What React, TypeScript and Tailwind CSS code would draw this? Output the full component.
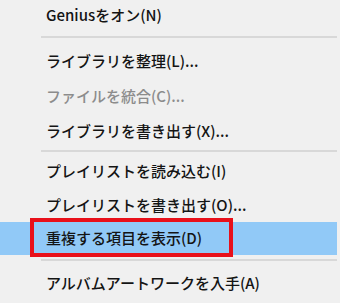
import React from "react";

type Item = {
  label: string;
  h: string;
  disabled?: boolean;
  active?: boolean;
};

const Row = ({ item }: { item: Item }) => {
  return (
    <div
      className={`relative flex items-center pl-[46px] ${item.h} ${
        item.active ? "bg-[#91c9f7]" : ""
      } ${item.disabled ? "text-[#8c8c8c]" : "text-[#141414]"}`}
    >
      {item.active && (
        <div className="absolute left-[30px] top-[-4px] w-[203px] h-[39px] border-[4px] border-[#e8101a]" />
      )}
      <span className="whitespace-nowrap">{item.label}</span>
    </div>
  );
};

const Separator = ({ h }: { h: string }) => (
  <div className={`flex items-center pl-[41px] ${h}`}>
    <div className="w-full h-[2px] bg-[#d8d8d8]" />
  </div>
);

const App = () => {
  return (
    <div
      className="w-[340px] h-[303px] bg-[#f0f0f0] overflow-hidden text-[15px] font-medium pr-[3px]"
      style={{ fontFamily: '"Noto Sans CJK JP", "Noto Sans", sans-serif' }}
    >
      <Row item={{ label: "Geniusをオン(N)", h: "h-[30px]" }} />
      <Separator h="h-[14px]" />
      <Row item={{ label: "ライブラリを整理(L)...", h: "h-[35px]" }} />
      <Row item={{ label: "ファイルを統合(C)...", h: "h-[35px]", disabled: true }} />
      <Row item={{ label: "ライブラリを書き出す(X)...", h: "h-[34px]" }} />
      <Separator h="h-[5px]" />
      <Row item={{ label: "プレイリストを読み込む(I)", h: "h-[36px]" }} />
      <Row item={{ label: "プレイリストを書き出す(O)...", h: "h-[33px]" }} />
      <Row item={{ label: "重複する項目を表示(D)", h: "h-[33px]", active: true }} />
      <Separator h="h-[10px]" />
      <Row item={{ label: "アルバムアートワークを入手(A)", h: "h-[36px]" }} />
    </div>
  );
};

export default App;
